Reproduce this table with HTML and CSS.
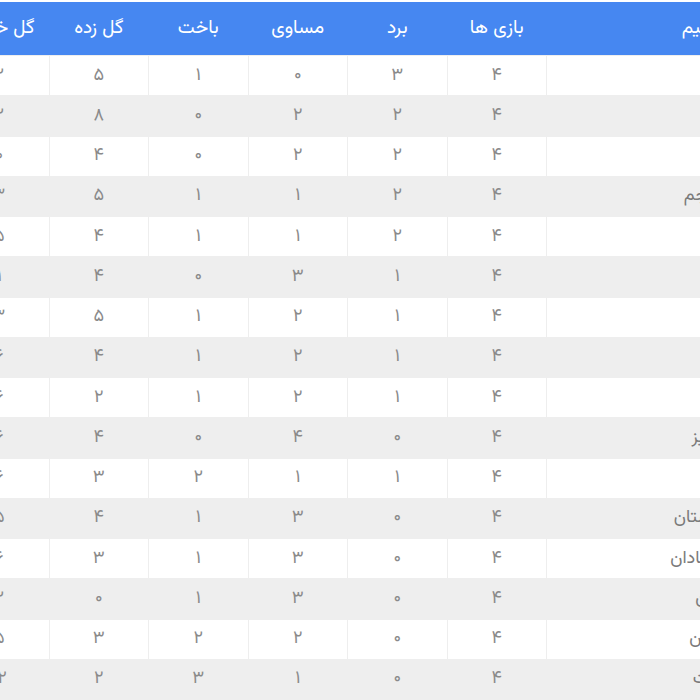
FILE: index.html
```html
<!DOCTYPE html>
<html lang="fa" dir="rtl">
<head>
<meta charset="utf-8">
<title>جدول لیگ</title>
<link rel="stylesheet" href="styles.css">
</head>
<body>
<div class="viewport">
<table class="league">
<colgroup>
<col class="c-team"><col class="c-num"><col class="c-num"><col class="c-num"><col class="c-num"><col class="c-num"><col class="c-num">
</colgroup>
<thead>
<tr><th class="team">تیم</th><th>بازی ها</th><th>برد</th><th>مساوی</th><th>باخت</th><th>گل زده</th><th>گل خورده</th></tr>
</thead>
<tbody>
<tr><td class="team">پرسپولیس</td><td>۴</td><td>۳</td><td>۰</td><td>۱</td><td>۵</td><td>۲</td></tr>
<tr><td class="team">استقلال</td><td>۴</td><td>۲</td><td>۲</td><td>۰</td><td>۸</td><td>۲</td></tr>
<tr><td class="team">سپاهان</td><td>۴</td><td>۲</td><td>۲</td><td>۰</td><td>۴</td><td>۰</td></tr>
<tr><td class="team">پارس جنوبی جم</td><td>۴</td><td>۲</td><td>۱</td><td>۱</td><td>۵</td><td>۳</td></tr>
<tr><td class="team">پدیده</td><td>۴</td><td>۲</td><td>۱</td><td>۱</td><td>۴</td><td>۵</td></tr>
<tr><td class="team">نفت تهران</td><td>۴</td><td>۱</td><td>۳</td><td>۰</td><td>۴</td><td>۱</td></tr>
<tr><td class="team">پیکان</td><td>۴</td><td>۱</td><td>۲</td><td>۱</td><td>۵</td><td>۳</td></tr>
<tr><td class="team">سایپا</td><td>۴</td><td>۱</td><td>۲</td><td>۱</td><td>۴</td><td>۶</td></tr>
<tr><td class="team">ذوب آهن</td><td>۴</td><td>۱</td><td>۲</td><td>۱</td><td>۲</td><td>۶</td></tr>
<tr><td class="team">پتروشیمی تبریز</td><td>۴</td><td>۰</td><td>۴</td><td>۰</td><td>۴</td><td>۶</td></tr>
<tr><td class="team">مس کرمان</td><td>۴</td><td>۱</td><td>۱</td><td>۲</td><td>۳</td><td>۶</td></tr>
<tr><td class="team">استقلال خوزستان</td><td>۴</td><td>۰</td><td>۳</td><td>۱</td><td>۴</td><td>۵</td></tr>
<tr><td class="team">صنعت نفت آبادان</td><td>۴</td><td>۰</td><td>۳</td><td>۱</td><td>۳</td><td>۶</td></tr>
<tr><td class="team">فولاد خوزستان</td><td>۴</td><td>۰</td><td>۳</td><td>۱</td><td>۰</td><td>۲</td></tr>
<tr><td class="team">نساجی مازندران</td><td>۴</td><td>۰</td><td>۲</td><td>۲</td><td>۳</td><td>۵</td></tr>
<tr><td class="team">سپید رود رشت</td><td>۴</td><td>۰</td><td>۱</td><td>۳</td><td>۲</td><td>۱۲</td></tr>
</tbody>
</table>
</div>
</body>
</html>
```
FILE: styles.css
```css
html, body {
  margin: 0;
  padding: 0;
  background: #ffffff;
}

.viewport {
  width: 700px;
  height: 700px;
  overflow: hidden;
  direction: rtl;
  padding-top: 2px;
  box-sizing: border-box;
}

.league {
  border-collapse: collapse;
  table-layout: fixed;
  width: 870px;
  margin-right: -120px;
  font-family: "Vazirmatn", "Noto Sans Arabic", "DejaVu Sans", sans-serif;
}

.c-team { width: 273px; }
.c-num { width: 99.5px; }

.league th {
  height: 53px;
  padding: 0;
  background: #4687f1;
  color: #ffffff;
  font-size: 19px;
  font-weight: normal;
  text-align: center;
  border: 0;
}

.league th.team {
  text-align: right;
  padding-right: 113px;
}

.league td {
  height: 39.25px;
  padding: 0;
  text-align: center;
  color: #8a8a8a;
  font-size: 18px;
  border: 1px solid #eeeeee;
}

.league td.team {
  text-align: right;
  padding-right: 21px;
  color: #7a7a7a;
}

.league tbody tr:nth-child(even) td {
  background: #eeeeee;
}
```
